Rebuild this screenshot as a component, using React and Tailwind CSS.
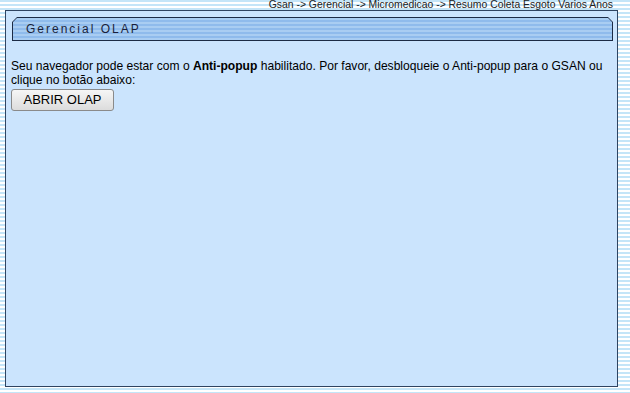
export default function App() {
  return (
    <div className="h-[393px] w-[630px] overflow-hidden bg-[repeating-linear-gradient(to_bottom,#c4e5f8_0px,#c4e5f8_2px,#ffffff_2px,#ffffff_4px)] font-['Liberation_Sans',Arial,sans-serif]">
      {/* Breadcrumb */}
      <div className="flex h-[10px] justify-end pr-[17px] text-[10.4px] leading-[10px] text-[#222]">
        Gsan -&gt; Gerencial -&gt; Micromedicao -&gt; Resumo Coleta Esgoto Varios Anos
      </div>

      {/* Panel */}
      <div className="ml-[5px] h-[377px] w-[613px] border border-[#2f4461] bg-[#cbe4fd] pl-[5px] pr-[4px] pt-[6px]">
        {/* Header bar */}
        <div className="ml-px h-[24px] w-[601px] bg-[#1c2b45] p-px [clip-path:polygon(5px_0,calc(100%-5px)_0,100%_5px,100%_100%,0_100%,0_5px)]">
          <div className="flex h-full items-center bg-[repeating-linear-gradient(to_bottom,#a9cdf2_0px,#a9cdf2_2px,#8fbbec_2px,#8fbbec_4px)] pl-[13px] text-[12px] tracking-[2px] text-[#1a1f3a] [clip-path:polygon(4px_0,calc(100%-4px)_0,100%_4px,100%_100%,0_100%,0_4px)]">
            Gerencial OLAP
          </div>
        </div>

        {/* Message */}
        <p className="mt-[18px] text-[12.08px] leading-[14px] text-black">
          Seu navegador pode estar com o <b>Anti-popup</b> habilitado. Por favor, desbloqueie o Anti-popup para o GSAN ou clique no botão abaixo:
        </p>
        <button className="mt-px h-[22px] w-[103px] rounded-[3px] border border-[#8a8a8a] bg-gradient-to-b from-[#f6f6f6] to-[#dcdcdc] text-[13px] leading-none text-black">
          ABRIR OLAP
        </button>
      </div>
    </div>
  );
}
